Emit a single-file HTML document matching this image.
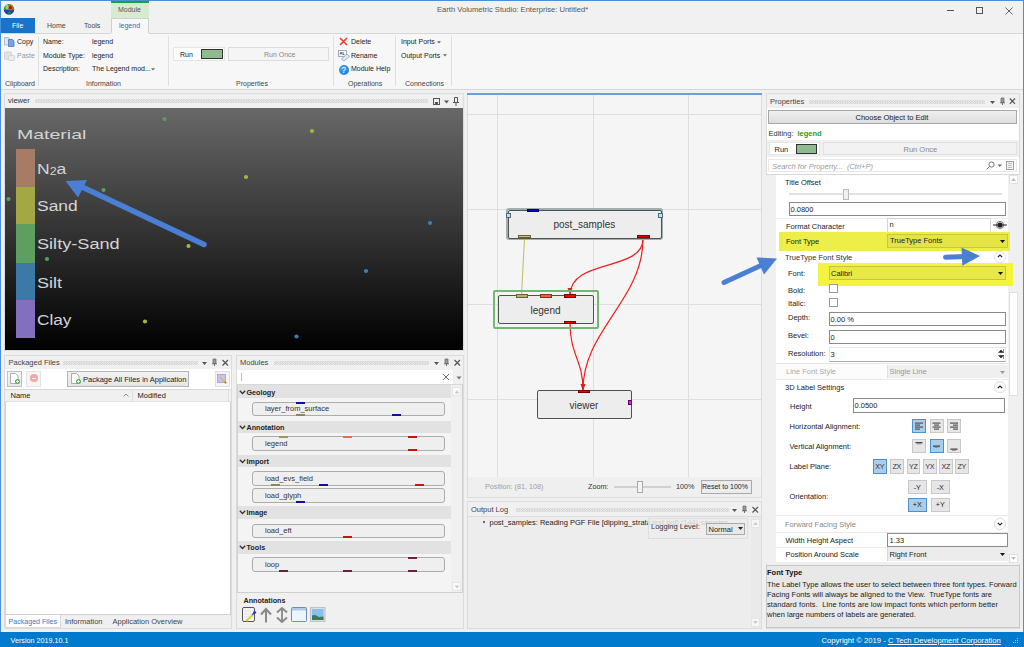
<!DOCTYPE html>
<html><head><meta charset="utf-8">
<style>
*{box-sizing:border-box;margin:0;padding:0}
html,body{width:1024px;height:647px;overflow:hidden;background:#f0f0f0;font-family:"Liberation Sans",sans-serif;color:#222;position:relative}
.a{position:absolute}
.t{position:absolute;white-space:nowrap;line-height:1}
.r7{font-size:7px}
.s75{font-size:7.5px}
.vl{font-size:14px;color:#d4d4d4;transform-origin:0 0}
.b{font-weight:bold}
.s7{font-size:7.2px}
.grip{background:repeating-conic-gradient(#d6d6d6 0 25%,transparent 0 50%) 0 0/2.5px 2px;height:4px!important}
</style></head><body>
<!-- window frame -->
<div class="a" style="left:0;top:0;width:1024px;height:33px;background:#f1f1f1"></div>
<div class="a" style="left:0;top:0;width:1024px;height:1px;background:#4a90d9"></div>
<div class="a" style="left:0;top:0;width:1px;height:647px;background:#4a90d9"></div>
<div class="a" style="left:1023px;top:0;width:1px;height:647px;background:#4a90d9"></div>
<!-- app icon -->
<svg class="a" style="left:2.5px;top:2.5px" width="12" height="12"><defs><clipPath id="gc"><circle cx="6" cy="6.3" r="5.2"/></clipPath></defs><g clip-path="url(#gc)"><rect width="12" height="12" fill="#2aa02a"/><rect y="7" width="12" height="6" fill="#1a3ad0"/><ellipse cx="7.3" cy="4.5" rx="2.8" ry="3" fill="#d06020"/><ellipse cx="7.3" cy="4.8" rx="1.5" ry="1.8" fill="#902010"/><ellipse cx="4" cy="4" rx="1.5" ry="2.5" fill="#90e060"/><ellipse cx="6.5" cy="9.8" rx="1.5" ry="1" fill="#10a010"/></g></svg>
<!-- contextual Module tab -->
<div class="a" style="left:111px;top:1px;width:38px;height:17px;background:#d9ead3"></div>
<div class="a" style="left:111px;top:1px;width:38px;height:2px;background:#1aa33a"></div>
<div class="t r7" style="left:118px;top:6px;color:#555">Module</div>
<div class="t" style="left:437px;top:5.5px;color:#555;font-size:7.6px">Earth Volumetric Studio: Enterprise: Untitled*</div>
<!-- window buttons -->
<div class="a" style="left:947px;top:10px;width:7px;height:1px;background:#555"></div>
<div class="a" style="left:975.5px;top:6.5px;width:7.5px;height:7.5px;border:1px solid #555"></div>
<svg class="a" style="left:1004.5px;top:6.5px" width="9" height="9"><path d="M0.5 0.5L7.5 7.5M7.5 0.5L0.5 7.5" stroke="#555" stroke-width="0.9"/></svg>
<!-- tabs -->
<div class="a" style="left:1px;top:18px;width:34px;height:15px;background:#1a73c8"></div>
<div class="t r7" style="left:12px;top:22px;color:#fff">File</div>
<div class="t r7" style="left:47px;top:22px;color:#444">Home</div>
<div class="t r7" style="left:84px;top:22px;color:#444">Tools</div>
<div class="a" style="left:111px;top:18px;width:38px;height:16px;background:#f7f7f7;border:1px solid #d0d0d0;border-bottom:none"></div>
<div class="t r7" style="left:119px;top:22px;color:#2a6fc0">legend</div>
<!-- ribbon body -->
<div class="a" style="left:1px;top:33px;width:1022px;height:57px;background:#f7f7f7;border-top:1px solid #d6d6d6;border-bottom:1px solid #d6d6d6"></div>
<div class="a" style="left:111px;top:33px;width:38px;height:1px;background:#f7f7f7"></div>
<!-- ribbon contents -->
<svg class="a" style="left:4px;top:36.5px" width="11" height="10"><path d="M0.5 0.5h4l1.5 1.5v6h-5.5z" fill="#dce8f8" stroke="#9ab0d0" stroke-width="0.8"/><path d="M4.5 2.5h4l1.5 1.5v5.5h-5.5z" fill="#7aa4e0" stroke="#4a78c0" stroke-width="0.8"/></svg>
<div class="t r7" style="left:17px;top:38px">Copy</div>
<svg class="a" style="left:4px;top:50.5px" width="11" height="10"><rect x="0.5" y="1" width="7" height="7.5" rx="1" fill="#e2e2e2" stroke="#cfcfcf" stroke-width="0.8"/><rect x="4.5" y="4.5" width="6" height="5" rx="0.8" fill="#ececec" stroke="#d0d0d0" stroke-width="0.8"/></svg>
<div class="t r7" style="left:17px;top:52px;color:#999">Paste</div>
<div class="t r7" style="left:5px;top:80px;color:#444">Clipboard</div>
<div class="a" style="left:38px;top:36px;width:1px;height:50px;background:#e0e0e0"></div>
<div class="t r7" style="left:43px;top:38px">Name:</div>
<div class="t r7" style="left:43px;top:52px">Module Type:</div>
<div class="t r7" style="left:43px;top:65px">Description:</div>
<div class="t r7" style="left:92px;top:38px">legend</div>
<div class="t r7" style="left:92px;top:52px">legend</div>
<div class="t r7" style="left:92px;top:65px">The Legend mod...</div>
<svg class="a" style="left:151px;top:67.5px" width="4" height="3"><path d="M0 0.3h4L2 2.6z" fill="#666"/></svg>
<div class="t r7" style="left:86px;top:80px;color:#444">Information</div>
<div class="a" style="left:168px;top:36px;width:1px;height:50px;background:#e0e0e0"></div>
<div class="a" style="left:173px;top:47px;width:52px;height:14px;background:#fff;border:1px solid #e6e6e6"></div>
<div class="t r7" style="left:180px;top:51px">Run</div>
<div class="a" style="left:201px;top:49px;width:22px;height:10px;background:#8fbc8f;border:1px solid #333"></div>
<div class="a" style="left:228px;top:47px;width:101px;height:14px;background:#f5f5f5;border:1px solid #dcdcdc"></div>
<div class="t r7" style="left:264px;top:51px;color:#888">Run Once</div>
<div class="t r7" style="left:236px;top:80px;color:#444">Properties</div>
<div class="a" style="left:333px;top:36px;width:1px;height:50px;background:#e0e0e0"></div>
<svg class="a" style="left:339px;top:37px" width="9" height="9"><path d="M1 1L8 8M8 1L1 8" stroke="#e8392a" stroke-width="1.5"/></svg>
<div class="t r7" style="left:351px;top:38px">Delete</div>
<svg class="a" style="left:338px;top:50px" width="12" height="11"><rect x="0.5" y="0.5" width="8" height="6" fill="#f8f8f8" stroke="#8a9ab0" stroke-width="0.8"/><path d="M2 4.5L3 2L4 4.5M5 2v2.5h1.5" stroke="#333" stroke-width="0.7" fill="none"/><path d="M3.5 9L9 4L11.5 6.5L6 11Z" fill="#dce8f6" stroke="#7a9ac0" stroke-width="0.7"/></svg>
<div class="t r7" style="left:351px;top:52px">Rename</div>
<div class="a" style="left:338.5px;top:64.5px;width:10px;height:10px;border-radius:50%;background:radial-gradient(circle at 40% 35%,#4aa8f4,#1070d0)"></div>
<div class="t" style="left:341.2px;top:65.5px;color:#fff;font-size:8.5px">?</div>
<div class="t r7" style="left:351px;top:65px">Module Help</div>
<div class="t r7" style="left:348px;top:80px;color:#444">Operations</div>
<div class="a" style="left:395px;top:36px;width:1px;height:50px;background:#e0e0e0"></div>
<div class="t r7" style="left:401px;top:38px">Input Ports</div>
<svg class="a" style="left:436.5px;top:40.5px" width="4" height="3"><path d="M0 0.3h4L2 2.6z" fill="#666"/></svg>
<div class="t r7" style="left:401px;top:52px">Output Ports</div>
<svg class="a" style="left:443px;top:54px" width="4" height="3"><path d="M0 0.3h4L2 2.6z" fill="#666"/></svg>
<div class="t r7" style="left:405px;top:80px;color:#444">Connections</div>
<div class="a" style="left:451px;top:36px;width:1px;height:50px;background:#e0e0e0"></div>
<!-- ===== VIEWER PANEL ===== -->
<div class="a" style="left:4px;top:93px;width:460px;height:258px;background:#f0f0f0;border:1px solid #dcdcdc"></div>
<div class="t s75" style="left:8px;top:97px;color:#333">viewer</div>
<div class="a grip" style="left:35px;top:99px;width:393px;height:4px"></div>
<svg class="a" style="left:432px;top:97px" width="30" height="9"><rect x="1.5" y="1.5" width="6" height="6" fill="none" stroke="#555"/><rect x="3" y="5" width="3" height="2" fill="#555"/><path d="M12 3.5h5l-2.5 3z" fill="#555"/><path d="M22.5 0.5h3v5h-3z M21 5.5h6 M24 5.5v3.5" stroke="#555" fill="none" stroke-width="1"/></svg>
<div class="a" style="left:5px;top:108px;width:458px;height:242px;background:linear-gradient(#686868,#000)"></div>
<div class="t vl" style="left:17px;top:128px;font-size:13px;transform:scaleX(1.5)">Material</div>
<div class="a" style="left:16px;top:149px;width:19px;height:38px;background:#a67c67"></div>
<div class="a" style="left:16px;top:187px;width:19px;height:37px;background:#a3a843"></div>
<div class="a" style="left:16px;top:224px;width:19px;height:39px;background:#5e9e60"></div>
<div class="a" style="left:16px;top:263px;width:19px;height:37px;background:#3c79a6"></div>
<div class="a" style="left:16px;top:300px;width:19px;height:38px;background:#8270be"></div>
<div class="t vl" style="left:37px;top:161.5px;transform:scaleX(1.25)">N<span style="font-size:10px;position:relative;top:1.5px">2</span>a</div>
<div class="t vl" style="left:37px;top:199px;transform:scaleX(1.245)">Sand</div>
<div class="t vl" style="left:37px;top:237px;transform:scaleX(1.295)">Silty-Sand</div>
<div class="t vl" style="left:37px;top:275.5px;transform:scaleX(1.29)">Silt</div>
<div class="t vl" style="left:37px;top:313px;transform:scaleX(1.23)">Clay</div>
<svg class="a" style="left:0;top:0" width="470" height="360">
<g fill="#58a058"><circle cx="164.5" cy="119" r="2.1"/><circle cx="103.5" cy="190" r="2.1"/><circle cx="8.5" cy="199" r="2.1"/><circle cx="47" cy="259" r="2.1"/></g>
<g fill="#a8b440"><circle cx="312" cy="131" r="2.1"/><circle cx="246" cy="177" r="2.1"/><circle cx="188.5" cy="246" r="2.1"/><circle cx="145" cy="321.5" r="2.1"/></g>
<g fill="#3a80b8"><circle cx="430" cy="223" r="2.1"/><circle cx="366" cy="271" r="2.1"/><circle cx="296.5" cy="336.5" r="2.1"/></g>
<path d="M204 244.5L80 186" stroke="#4a7fd4" stroke-width="5.5" stroke-linecap="round"/>
<path d="M65.5 181L87 180L78 197.5Z" fill="#4a7fd4"/>
</svg>
<!-- ===== PACKAGED FILES ===== -->
<div class="a" style="left:4px;top:355px;width:228px;height:274px;background:#f0f0f0;border:1px solid #dcdcdc"></div>
<div class="t s75" style="left:8.5px;top:359px;color:#444">Packaged Files</div>
<div class="a grip" style="left:63px;top:361px;width:135px;height:4px"></div>
<svg class="a" style="left:200px;top:358px" width="30" height="10"><path d="M2 4h5l-2.5 3z" fill="#555"/><path d="M13 1h3v4.5h-3z" fill="#999" stroke="#666" stroke-width="0.7"/><path d="M12 5.8h5M14.5 5.8v2.2" stroke="#666" stroke-width="0.9"/><path d="M22.5 2L28 7.5M28 2L22.5 7.5" stroke="#555" stroke-width="1.2"/></svg>
<div class="a" style="left:5px;top:369px;width:226px;height:20px;background:#fff"></div>
<div class="a" style="left:7px;top:371px;width:15px;height:15.5px;background:linear-gradient(#f6f6f6,#e8e8e8);border:1px solid #c0c0c0"></div>
<svg class="a" style="left:9px;top:372px" width="12" height="13"><path d="M1.5 1.5h5l2.5 2.5v7.5h-7.5z" fill="#fff" stroke="#999" stroke-width="0.8"/><circle cx="8.5" cy="9.5" r="2.5" fill="#62a862"/><path d="M7 9.5h3M8.5 8v3" stroke="#fff" stroke-width="0.8"/></svg>
<div class="a" style="left:26px;top:371px;width:15px;height:15.5px;background:#f6f6f6;border:1px solid #e4e4e4"></div>
<div class="a" style="left:29.5px;top:374px;width:8px;height:8px;border-radius:50%;background:#f4a4a4"></div>
<div class="a" style="left:31.5px;top:377.5px;width:4px;height:1px;background:#fff"></div>
<div class="a" style="left:67px;top:371px;width:122px;height:16px;background:linear-gradient(#f2f2f2,#e6e6e6);border:1px solid #b4b4b4"></div>
<svg class="a" style="left:70px;top:372px" width="12" height="13"><path d="M1.5 1.5h5l2.5 2.5v7.5h-7.5z" fill="#fff" stroke="#999" stroke-width="0.8"/><circle cx="8.5" cy="9.5" r="2.5" fill="#62a862"/><path d="M7 9.5h3M8.5 8v3" stroke="#fff" stroke-width="0.8"/></svg>
<div class="t s75" style="left:83px;top:376px;color:#222">Package All Files in Application</div>
<div class="a" style="left:214.5px;top:371px;width:15px;height:15.5px;background:#f6f6f6;border:1px solid #e0e0e0"></div>
<div class="a" style="left:217px;top:374px;width:9px;height:9px;background:#c4c4f4;border:1px solid #a8a8e8"></div>
<svg class="a" style="left:219px;top:376px" width="8" height="8"><path d="M1 1L7 7" stroke="#d8c040" stroke-width="1.5"/><circle cx="6.5" cy="6.5" r="1" fill="#e05050"/></svg>
<div class="a" style="left:5px;top:389px;width:226px;height:226px;background:#fff;border:1px solid #d0d0d0;border-top:none"></div>
<div class="a" style="left:5px;top:388.5px;width:226px;height:13.5px;background:#f0f0f0;border-top:1px solid #d8d8d8;border-bottom:1px solid #e2e2e2"></div>
<div class="t s75" style="left:10.5px;top:392px">Name</div>
<svg class="a" style="left:123px;top:393px" width="6" height="4"><path d="M0.5 3.5L3 1L5.5 3.5" stroke="#777" fill="none" stroke-width="0.8"/></svg>
<div class="a" style="left:132px;top:389px;width:1px;height:13px;background:#e0e0e0"></div>
<div class="t s75" style="left:137.5px;top:392px">Modified</div>
<div class="a" style="left:228px;top:389px;width:1px;height:13px;background:#e0e0e0"></div>
<div class="a" style="left:5px;top:615px;width:56px;height:13px;background:#fff;border:1px solid #dadada;border-top:none"></div>
<div class="t" style="left:8.5px;top:618.5px;color:#3a78c0;font-size:7.1px">Packaged Files</div>
<div class="t s75" style="left:65px;top:618px;color:#444">Information</div>
<div class="t s75" style="left:112.5px;top:618px;color:#444">Application Overview</div>
<!-- ===== MODULES ===== -->
<div class="a" style="left:236px;top:355px;width:228px;height:274px;background:#f0f0f0;border:1px solid #dcdcdc"></div>
<div class="t s75" style="left:240px;top:359px;color:#444">Modules</div>
<div class="a grip" style="left:274px;top:361px;width:155px;height:4px"></div>
<svg class="a" style="left:432px;top:358px" width="30" height="10"><path d="M2 4h5l-2.5 3z" fill="#555"/><path d="M13 1h3v4.5h-3z" fill="#999" stroke="#666" stroke-width="0.7"/><path d="M12 5.8h5M14.5 5.8v2.2" stroke="#666" stroke-width="0.9"/><path d="M22.5 2L28 7.5M28 2L22.5 7.5" stroke="#555" stroke-width="1.2"/></svg>
<div class="a" style="left:237px;top:370px;width:216px;height:14px;background:#fff"></div>
<div class="a" style="left:241px;top:373px;width:1px;height:8px;background:#c8c860"></div>
<svg class="a" style="left:442px;top:373px" width="8" height="8"><path d="M1 1L7 7M7 1L1 7" stroke="#666" stroke-width="1"/></svg>
<svg class="a" style="left:456px;top:376px" width="6" height="4"><path d="M0.5 0.5h5L3 3.5z" fill="#777"/></svg>
<div class="a" style="left:237px;top:384px;width:226px;height:209px;background:#f4f4f4;border:1px solid #d0d0d0;border-top:1px solid #d8d8d8"></div>
<div class="a" style="left:451px;top:385px;width:11px;height:207px;background:#f0f0f0"></div>
<div class="a" style="left:452px;top:387px;width:9px;height:9px;background:#fafafa;border:1px solid #e6e6e6"></div>
<svg class="a" style="left:454px;top:390px" width="6" height="4"><path d="M0.5 3.5h5L3 0.5z" fill="#ccc"/></svg>
<div class="a" style="left:452px;top:582px;width:9px;height:9px;background:#fafafa;border:1px solid #e6e6e6"></div>
<svg class="a" style="left:454px;top:585px" width="6" height="4"><path d="M0.5 0.5h5L3 3.5z" fill="#ccc"/></svg>
<div class="a" style="left:238px;top:385px;width:213px;height:13.0px;background:#e2e2e2"></div>
<svg class="a" style="left:239px;top:389.5px" width="7" height="5"><path d="M0.8 0.8L3.5 3.5L6.2 0.8" stroke="#333" fill="none" stroke-width="1.3"/></svg>
<div class="t b" style="left:246.5px;top:388.5px;font-size:7.2px">Geology</div>
<div class="a" style="left:252px;top:401.5px;width:193px;height:14.5px;background:#efefef;border:1px solid #acacac;border-radius:3px"></div>
<div class="t s75" style="left:265px;top:405.0px;color:#333">layer_from_surface</div>
<div class="a" style="left:296px;top:401.5px;width:9px;height:2px;background:#1010a0"></div>
<div class="a" style="left:296px;top:414.0px;width:9px;height:2px;background:#8a8a50"></div>
<div class="a" style="left:392px;top:414.0px;width:9px;height:2px;background:#1010a0"></div>
<div class="a" style="left:238px;top:420.5px;width:213px;height:12.5px;background:#e2e2e2"></div>
<svg class="a" style="left:239px;top:424.5px" width="7" height="5"><path d="M0.8 0.8L3.5 3.5L6.2 0.8" stroke="#333" fill="none" stroke-width="1.3"/></svg>
<div class="t b" style="left:246.5px;top:423.5px;font-size:7.2px">Annotation</div>
<div class="a" style="left:252px;top:436px;width:193px;height:14.5px;background:#efefef;border:1px solid #acacac;border-radius:3px"></div>
<div class="t s75" style="left:265px;top:439.5px;color:#333">legend</div>
<div class="a" style="left:279px;top:436px;width:9px;height:2px;background:#9a9a60"></div>
<div class="a" style="left:343px;top:436px;width:9px;height:2px;background:#e07050"></div>
<div class="a" style="left:408px;top:436px;width:9px;height:2px;background:#d01010"></div>
<div class="a" style="left:408px;top:448.5px;width:9px;height:2px;background:#d01010"></div>
<div class="a" style="left:238px;top:454.5px;width:213px;height:12.5px;background:#e2e2e2"></div>
<svg class="a" style="left:239px;top:458.5px" width="7" height="5"><path d="M0.8 0.8L3.5 3.5L6.2 0.8" stroke="#333" fill="none" stroke-width="1.3"/></svg>
<div class="t b" style="left:246.5px;top:457.5px;font-size:7.2px">Import</div>
<div class="a" style="left:252px;top:471px;width:193px;height:14.5px;background:#efefef;border:1px solid #acacac;border-radius:3px"></div>
<div class="t s75" style="left:265px;top:474.5px;color:#333">load_evs_field</div>
<div class="a" style="left:271px;top:483.5px;width:9px;height:2px;background:#8a8a50"></div>
<div class="a" style="left:319px;top:483.5px;width:9px;height:2px;background:#1010a0"></div>
<div class="a" style="left:415px;top:483.5px;width:9px;height:2px;background:#d01010"></div>
<div class="a" style="left:252px;top:488px;width:193px;height:14.5px;background:#efefef;border:1px solid #acacac;border-radius:3px"></div>
<div class="t s75" style="left:265px;top:491.5px;color:#333">load_glyph</div>
<div class="a" style="left:296px;top:500.5px;width:9px;height:2px;background:#1010a0"></div>
<div class="a" style="left:238px;top:506px;width:213px;height:12.5px;background:#e2e2e2"></div>
<svg class="a" style="left:239px;top:510px" width="7" height="5"><path d="M0.8 0.8L3.5 3.5L6.2 0.8" stroke="#333" fill="none" stroke-width="1.3"/></svg>
<div class="t b" style="left:246.5px;top:509px;font-size:7.2px">Image</div>
<div class="a" style="left:252px;top:523.5px;width:193px;height:14.5px;background:#efefef;border:1px solid #acacac;border-radius:3px"></div>
<div class="t s75" style="left:265px;top:527.0px;color:#333">load_eft</div>
<div class="a" style="left:343px;top:536.0px;width:9px;height:2px;background:#d01010"></div>
<div class="a" style="left:238px;top:541px;width:213px;height:12.5px;background:#e2e2e2"></div>
<svg class="a" style="left:239px;top:545px" width="7" height="5"><path d="M0.8 0.8L3.5 3.5L6.2 0.8" stroke="#333" fill="none" stroke-width="1.3"/></svg>
<div class="t b" style="left:246.5px;top:544px;font-size:7.2px">Tools</div>
<div class="a" style="left:252px;top:557px;width:193px;height:14.5px;background:#efefef;border:1px solid #acacac;border-radius:3px"></div>
<div class="t s75" style="left:265px;top:560.5px;color:#333">loop</div>
<div class="a" style="left:408px;top:557px;width:9px;height:2px;background:#6a2040"></div>
<div class="a" style="left:279px;top:569.5px;width:9px;height:2px;background:#6a2040"></div>
<div class="a" style="left:343px;top:569.5px;width:9px;height:2px;background:#6a2040"></div>
<div class="a" style="left:408px;top:569.5px;width:9px;height:2px;background:#6a2040"></div>
<div class="a" style="left:237px;top:594px;width:226px;height:34px;background:#f0f0f0"></div>
<div class="t b" style="left:243.5px;top:596.5px;font-size:7.2px">Annotations</div>
<svg class="a" style="left:241px;top:606px" width="90" height="18">
<rect x="1.5" y="1.5" width="12" height="14" rx="1.5" fill="#f4f4f4" stroke="#555"/><path d="M3 5h8M3 8h8M3 11h8" stroke="#ddd" stroke-width="0.7"/><path d="M5 15L12 9" stroke="#d8d040" stroke-width="2.2"/><path d="M10.5 9.5L13.5 4L15.5 7Z" fill="#2030e0"/>
<path d="M25 16.5V3.5M20 8.5L25 3L30 8.5" stroke="#888" stroke-width="2" fill="none"/>
<path d="M41 3.5V14.5M36 6.5L41 2L46 6.5M36 11.5L41 16L46 11.5" stroke="#888" stroke-width="1.8" fill="none"/>
<rect x="50.5" y="1.5" width="15" height="14" rx="1" fill="#eef4fc" stroke="#6a8cc0"/><rect x="51" y="2" width="14" height="2.5" fill="#b0c8e8"/>
<rect x="69.5" y="1.5" width="14.5" height="14" fill="#ddd" stroke="#c0c0c0"/><rect x="71" y="3" width="11.5" height="11" fill="#8ac0f0"/><path d="M71 14V9.5C74 8 76 10 78 11L82.5 10.5V14Z" fill="#3a7a5a"/>
</svg>
<!-- ===== NETWORK ===== -->
<div class="a" style="left:467px;top:93px;width:295px;height:405px;background:#f0f0f0;border:1px solid #dcdcdc;border-top:none"></div>
<div class="a" style="left:468px;top:95px;width:293px;height:382px;background:#f5f5f5"></div>
<div class="a" style="left:467px;top:93px;width:295px;height:1.5px;background:#6aa0d8"></div>
<div class="a" style="left:497px;top:95px;width:1px;height:382px;background:#dedede"></div>
<div class="a" style="left:593px;top:95px;width:1px;height:382px;background:#dedede"></div>
<div class="a" style="left:688px;top:95px;width:1px;height:382px;background:#dedede"></div>
<div class="a" style="left:468px;top:114px;width:293px;height:1px;background:#dedede"></div>
<div class="a" style="left:468px;top:209px;width:293px;height:1px;background:#dedede"></div>
<div class="a" style="left:468px;top:304px;width:293px;height:1px;background:#dedede"></div>
<div class="a" style="left:468px;top:399px;width:293px;height:1px;background:#dedede"></div>
<!-- wires -->
<svg class="a" style="left:0;top:0" width="770" height="480">
<path d="M524.5 239L521.5 295" stroke="#c8c070" stroke-width="1.1" fill="none"/>
<path d="M643 239C643 272 570 258 570 295" stroke="#f02020" stroke-width="1.2" fill="none"/>
<path d="M643 239C643 300 583 330 583 390" stroke="#f02020" stroke-width="1.2" fill="none"/>
<path d="M570 323C570 355 583 360 583 390" stroke="#f02020" stroke-width="1.2" fill="none"/>
<path d="M580.5 384L583 391L585.5 384Z" fill="#e02020"/>
<path d="M567.5 288L570 295L572.5 288Z" fill="#e02020"/>
</svg>
<!-- post_samples node -->
<div class="a" style="left:506px;top:208px;width:157px;height:32px;border:2px solid #9fb0ae;border-radius:3px;background:#ededed"></div>
<div class="a" style="left:507.5px;top:209.5px;width:154px;height:29px;border:1px solid #505050;border-radius:2px"></div>
<div class="t" style="left:553.5px;top:220px;font-size:10px;color:#333">post_samples</div>
<div class="a" style="left:526.8px;top:208.5px;width:12.5px;height:3.3px;background:#0a0acc;border:0.5px solid #000060"></div>
<div class="a" style="left:506px;top:213px;width:5px;height:5px;background:#bfe0f0;border:1px solid #4a6a80"></div>
<div class="a" style="left:657.5px;top:213px;width:5px;height:5px;background:#bfe0f0;border:1px solid #4a6a80"></div>
<div class="a" style="left:518.2px;top:234.5px;width:12.8px;height:3.5px;background:#c8c070;border:0.5px solid #6a6030"></div>
<div class="a" style="left:637px;top:234.5px;width:12.5px;height:3.5px;background:#f00000;border:0.5px solid #800000"></div>
<!-- legend node -->
<div class="a" style="left:492.5px;top:289.5px;width:106px;height:39px;border:2px solid #72b872;border-radius:2px"></div>
<div class="a" style="left:498px;top:295px;width:95.5px;height:28.5px;border:1px solid #505050;border-radius:2px;background:#ededed"></div>
<div class="t" style="left:530.5px;top:305.5px;font-size:10px;color:#333">legend</div>
<div class="a" style="left:516px;top:294px;width:12px;height:3.5px;background:#b8b070;border:0.5px solid #6a6030"></div>
<div class="a" style="left:539.5px;top:294px;width:12px;height:3.5px;background:#f06040;border:0.5px solid #803020"></div>
<div class="a" style="left:564px;top:294px;width:12px;height:3.5px;background:#f00000;border:0.5px solid #800000"></div>
<div class="a" style="left:564px;top:320.5px;width:12px;height:3.5px;background:#f00000;border:0.5px solid #800000"></div>
<!-- viewer node -->
<div class="a" style="left:536.5px;top:390px;width:95px;height:28.5px;border:1px solid #505050;border-radius:2px;background:#ededed"></div>
<div class="t" style="left:569.5px;top:401px;font-size:10px;color:#333">viewer</div>
<div class="a" style="left:577.5px;top:389.5px;width:12px;height:3.5px;background:#f00000;border:0.5px solid #800000"></div>
<div class="a" style="left:628px;top:400px;width:4px;height:4.5px;background:#f010f0;border:0.5px solid #600060"></div>
<!-- bottom bar -->
<div class="a" style="left:468px;top:477px;width:293px;height:20px;background:#efefef"></div>
<div class="t s7" style="left:485px;top:483px;color:#a0a0a0">Position: (81, 108)</div>
<div class="t s7" style="left:588px;top:483px;color:#333">Zoom:</div>
<div class="a" style="left:614px;top:486px;width:57px;height:2px;background:#e0e0e0;border:0.5px solid #d0d0d0"></div>
<div class="a" style="left:636.5px;top:481px;width:6px;height:12px;background:#f4f4f4;border:1px solid #aaa"></div>
<div class="t s7" style="left:676px;top:483px;color:#333">100%</div>
<div class="a" style="left:700.5px;top:479.5px;width:51px;height:14px;background:#ececec;border:1px solid #aaa"></div>
<div class="t" style="left:702px;top:483px;color:#222;font-size:7px">Reset to 100%</div>
<!-- ===== OUTPUT LOG ===== -->
<div class="a" style="left:467px;top:501px;width:295px;height:128px;background:#f0f0f0;border:1px solid #dcdcdc"></div>
<div class="t s75" style="left:471px;top:506px;color:#444">Output Log</div>
<div class="a grip" style="left:516px;top:508px;width:213px;height:4px"></div>
<svg class="a" style="left:730px;top:505px" width="30" height="10"><path d="M2 4h5l-2.5 3z" fill="#555"/><path d="M13 1h3v4.5h-3z" fill="#999" stroke="#666" stroke-width="0.7"/><path d="M12 5.8h5M14.5 5.8v2.2" stroke="#666" stroke-width="0.9"/><path d="M22.5 2L28 7.5M28 2L22.5 7.5" stroke="#555" stroke-width="1.2"/></svg>
<div class="a" style="left:468px;top:516px;width:293px;height:112px;background:#ededed;border-top:1px solid #dadada"></div>
<div class="a" style="left:750.5px;top:517px;width:10px;height:111px;background:#eaeaea"></div>
<div class="a" style="left:751px;top:519px;width:9px;height:9px;background:#f6f6f6;border:1px solid #e4e4e4"></div>
<svg class="a" style="left:753px;top:522px" width="5" height="3"><path d="M0 3h5L2.5 0z" fill="#ccc"/></svg>
<div class="a" style="left:751px;top:618px;width:9px;height:9px;background:#f6f6f6;border:1px solid #e4e4e4"></div>
<svg class="a" style="left:753px;top:621px" width="5" height="3"><path d="M0 0h5L2.5 3z" fill="#ccc"/></svg>
<div class="a" style="left:483px;top:521px;width:1.5px;height:1.5px;background:#666"></div>
<div class="t s75" style="left:489.5px;top:518.5px;color:#222">post_samples: Reading PGF File [dipping_strata</div>
<div class="a" style="left:648px;top:518px;width:100px;height:20.5px;background:#eeeeee;border:1px solid #dddddd;opacity:0.9"></div>
<div class="t s75" style="left:652px;top:518.5px;color:#cfcfcf">test.pgf] (144) samples</div>
<div class="t s75" style="left:651px;top:523px;color:#333">Logging Level:</div>
<div class="a" style="left:706px;top:522.5px;width:39px;height:12.5px;background:#e8e8e8;border:1px solid #aaa"></div>
<div class="t s75" style="left:708.5px;top:525.5px;color:#222">Normal</div>
<svg class="a" style="left:738px;top:527px" width="5" height="4"><path d="M0 0h5L2.5 3z" fill="#222"/></svg>
<!-- ===== PROPERTIES ===== -->
<div class="a" style="left:766px;top:93px;width:254px;height:536px;background:#f0f0f0;border:1px solid #dcdcdc"></div>
<div class="t s75" style="left:770px;top:97.5px;color:#444">Properties</div>
<div class="a grip" style="left:809px;top:99.5px;width:176px;height:4px"></div>
<svg class="a" style="left:988px;top:97px" width="30" height="10"><path d="M2 4h5l-2.5 3z" fill="#555"/><path d="M13 1h3v4.5h-3z" fill="#999" stroke="#666" stroke-width="0.7"/><path d="M12 5.8h5M14.5 5.8v2.2" stroke="#666" stroke-width="0.9"/><path d="M21.8 1.5L27 6.8M27 1.5L21.8 6.8" stroke="#555" stroke-width="1.2"/></svg>
<div class="a" style="left:767px;top:108px;width:252px;height:66px;background:#fff"></div>
<div class="a" style="left:768px;top:110px;width:249px;height:14px;background:linear-gradient(#efefef,#dedede);border:1px solid #a8a8a8"></div>
<div class="t s75" style="left:855.5px;top:113.5px;color:#222">Choose Object to Edit</div>
<div class="t s75" style="left:768.5px;top:129.5px;color:#333">Editing:</div>
<div class="t s75 b" style="left:797.5px;top:129.5px;color:#2a9a2a">legend</div>
<div class="a" style="left:767px;top:140px;width:252px;height:17px;background:#f0f0f0"></div>
<div class="a" style="left:768.5px;top:142px;width:51px;height:13px;background:#fff;border:1px solid #e6e6e6"></div>
<div class="t s75" style="left:774.5px;top:145.5px;color:#222">Run</div>
<div class="a" style="left:796px;top:144px;width:21px;height:10px;background:#8fbc8f;border:1px solid #333"></div>
<div class="a" style="left:823px;top:142px;width:194px;height:13px;background:#f2f2f2;border:1px solid #e0e0e0"></div>
<div class="t s75" style="left:903.5px;top:145.5px;color:#888">Run Once</div>
<div class="a" style="left:768px;top:159px;width:249px;height:13px;background:#fff;border:1px solid #e8e8e8"></div>
<div class="t s75" style="left:772px;top:162.5px;color:#9a9a9a;font-style:italic">Search for Property...&nbsp;&nbsp;(Ctrl+P)</div>
<svg class="a" style="left:985px;top:161px" width="32" height="10"><circle cx="6.5" cy="3.5" r="2.6" fill="none" stroke="#666" stroke-width="0.9"/><path d="M4.6 5.4L1.5 8.5" stroke="#666" stroke-width="1"/><path d="M12.5 3.5h4.5l-2.25 2.5z" fill="#666"/><rect x="21.5" y="0.5" width="7" height="8" fill="#f4f4f4" stroke="#888" stroke-width="0.8"/><path d="M23 2.5h4M23 4.5h4M23 6.5h4" stroke="#999" stroke-width="0.6"/></svg>
<!-- grid -->
<div class="a" style="left:766px;top:174px;width:254px;height:389px;background:#f0f0f0;border-top:1px solid #d8d8d8"></div>
<div class="a" style="left:776px;top:175px;width:232px;height:387px;background:#fff"></div>
<div class="a" style="left:1008px;top:175px;width:10px;height:387px;background:#f0f0f0"></div>
<div class="a" style="left:1008.5px;top:175px;width:9px;height:9px;background:#fff;border:1px solid #e0e0e0"></div>
<svg class="a" style="left:1011px;top:178px" width="5" height="3"><path d="M0 3h5L2.5 0z" fill="#bbb"/></svg>
<div class="a" style="left:1008.5px;top:292px;width:9px;height:104px;background:#fff;border:1px solid #e0e0e0"></div>
<div class="a" style="left:1008.5px;top:554px;width:9px;height:9px;background:#fff;border:1px solid #e0e0e0"></div>
<svg class="a" style="left:1011px;top:557px" width="5" height="3"><path d="M0 0h5L2.5 3z" fill="#bbb"/></svg>
<div class="t s75" style="left:785px;top:179px;color:#222">Title Offset</div>
<div class="a" style="left:789px;top:193px;width:213px;height:2px;background:#e2e2e2"></div>
<div class="a" style="left:843px;top:189px;width:6px;height:11px;background:#f0f0f0;border:1px solid #bbb"></div>
<div class="a" style="left:789px;top:202px;width:216.5px;height:13.5px;background:#fff;border:1px solid #8a8a8a"></div>
<div class="t s75" style="left:790.5px;top:205.5px;color:#222">0.0800</div>
<div class="a" style="left:776px;top:218px;width:232px;height:1px;background:#ececec"></div>
<div class="t s75" style="left:786px;top:223px;color:#222">Format Character</div>
<div class="a" style="left:887px;top:218px;width:103.5px;height:14.5px;background:#fff;border:1px solid #d4d4d4"></div>
<div class="t s75" style="left:889.5px;top:220.5px;color:#222">n</div>
<svg class="a" style="left:993px;top:221px" width="14" height="8"><path d="M0 4h14" stroke="#222" stroke-width="1"/><circle cx="7" cy="4" r="2.6" fill="#222"/><circle cx="7" cy="4" r="3.6" fill="none" stroke="#222" stroke-width="0.6"/></svg>
<!-- Font Type highlight -->
<div class="a" style="left:779px;top:232px;width:231px;height:19px;background:#eeee48"></div>
<div class="t s75" style="left:786px;top:237.5px;color:#222">Font Type</div>
<div class="a" style="left:887px;top:233.5px;width:120.5px;height:14px;background:#e4e446;border:1px solid #c8c840"></div>
<div class="t s75" style="left:890px;top:237px;color:#222">TrueType Fonts</div>
<svg class="a" style="left:999.5px;top:240px" width="5" height="4"><path d="M0 0h5L2.5 3z" fill="#111"/></svg>
<div class="t s75" style="left:785px;top:253.5px;color:#333">TrueType Font Style</div>
<div class="a" style="left:993.5px;top:250.5px;width:12px;height:12px;border-radius:50%;border:1px solid #ddd;background:#fff"></div>
<svg class="a" style="left:996.5px;top:254px" width="6" height="4"><path d="M0.8 3.2L3 1L5.2 3.2" stroke="#222" stroke-width="1.2" fill="none"/></svg>
<!-- Font: highlight -->
<div class="a" style="left:818px;top:263px;width:194.5px;height:22.5px;background:#f4f440"></div>
<div class="t s75" style="left:788px;top:269.5px;color:#222">Font:</div>
<div class="a" style="left:829px;top:266px;width:176.5px;height:13.5px;background:#e8e848;border:1px solid #c4c440"></div>
<div class="t s75" style="left:831px;top:269.5px;color:#222">Calibri</div>
<svg class="a" style="left:998px;top:271.5px" width="5" height="4"><path d="M0 0h5L2.5 3z" fill="#111"/></svg>
<div class="t s75" style="left:788px;top:286.5px;color:#222">Bold:</div>
<div class="a" style="left:829px;top:284px;width:9px;height:9px;background:#fff;border:1px solid #999"></div>
<div class="t s75" style="left:788px;top:299.5px;color:#222">Italic:</div>
<div class="a" style="left:829px;top:298px;width:9px;height:9px;background:#fff;border:1px solid #999"></div>
<div class="t s75" style="left:788px;top:314px;color:#222">Depth:</div>
<div class="a" style="left:829px;top:312px;width:176.5px;height:13.5px;background:#fff;border:1px solid #8a8a8a"></div>
<div class="t s75" style="left:830.5px;top:315.5px;color:#222">0.00 %</div>
<div class="t s75" style="left:788px;top:331.5px;color:#222">Bevel:</div>
<div class="a" style="left:829px;top:330px;width:176.5px;height:13.5px;background:#fff;border:1px solid #8a8a8a"></div>
<div class="t s75" style="left:830.5px;top:333.5px;color:#222">0</div>
<div class="t s75" style="left:788px;top:349.5px;color:#222">Resolution:</div>
<div class="a" style="left:829px;top:347px;width:176.5px;height:14.5px;background:#fff;border:1px solid #e6e6e6;border-bottom:1px solid #aaa"></div>
<div class="t s75" style="left:830.5px;top:350.5px;color:#222">3</div>
<svg class="a" style="left:998px;top:348px" width="6" height="12"><path d="M0.5 4.5L3 2L5.5 4.5Z M5.5 1v4" fill="#222" stroke="#222" stroke-width="0.5"/><path d="M0.5 7.5L3 10L5.5 7.5Z M5.5 7v4" fill="#222" stroke="#222" stroke-width="0.5"/></svg>
<div class="a" style="left:776px;top:363px;width:232px;height:1px;background:#e4e4e4"></div>
<div class="a" style="left:776px;top:364px;width:232px;height:15px;background:#fcfcfc"></div>
<div class="t s75" style="left:786px;top:368px;color:#aaa">Line Font Style</div>
<div class="a" style="left:887px;top:364.5px;width:120.5px;height:13.5px;background:#efefef;border-left:1px solid #e0e0e0"></div>
<div class="t s75" style="left:889.5px;top:368px;color:#999">Single Line</div>
<svg class="a" style="left:1000px;top:370.5px" width="5" height="4"><path d="M0 0h5L2.5 3z" fill="#999"/></svg>
<div class="a" style="left:776px;top:379px;width:232px;height:1px;background:#ececec"></div>
<div class="t s75" style="left:785px;top:384px;color:#222">3D Label Settings</div>
<div class="a" style="left:993.5px;top:381px;width:12px;height:12px;border-radius:50%;border:1px solid #ddd;background:#fff"></div>
<svg class="a" style="left:996.5px;top:385px" width="6" height="4"><path d="M0.8 3.2L3 1L5.2 3.2" stroke="#222" stroke-width="1.2" fill="none"/></svg>
<div class="t s75" style="left:790px;top:402.5px;color:#222">Height</div>
<div class="a" style="left:853px;top:398px;width:151.5px;height:14.5px;background:#fff;border:1px solid #8a8a8a"></div>
<div class="t s75" style="left:854.5px;top:402px;color:#222">0.0500</div>
<div class="t s75" style="left:789.5px;top:423px;color:#222">Horizontal Alignment:</div>
<div class="t s75" style="left:789.5px;top:443px;color:#222">Vertical Alignment:</div>
<div class="t s75" style="left:789.5px;top:463px;color:#222">Label Plane:</div>
<div class="t s75" style="left:789.5px;top:492.5px;color:#222">Orientation:</div>
<div class="a" style="left:912px;top:419px;width:14px;height:14px;background:#a9cdea;border:1px solid #4f8fcc"></div>
<div class="a" style="left:929.5px;top:419px;width:14px;height:14px;background:#e6e6e6;border:1px solid #c8c8c8"></div>
<div class="a" style="left:947px;top:419px;width:14px;height:14px;background:#e6e6e6;border:1px solid #c8c8c8"></div>
<svg class="a" style="left:912px;top:419px" width="50" height="14"><rect x="3" y="3.5" width="8" height="1.2" fill="#555"/><rect x="3" y="5.5" width="5" height="1.2" fill="#555"/><rect x="3" y="7.5" width="8" height="1.2" fill="#555"/><rect x="3" y="9.5" width="5" height="1.2" fill="#555"/><rect x="20.5" y="3.5" width="8" height="1.2" fill="#555"/><rect x="22.0" y="5.5" width="5" height="1.2" fill="#555"/><rect x="20.5" y="7.5" width="8" height="1.2" fill="#555"/><rect x="22.0" y="9.5" width="5" height="1.2" fill="#555"/><rect x="38" y="3.5" width="8" height="1.2" fill="#555"/><rect x="41" y="5.5" width="5" height="1.2" fill="#555"/><rect x="38" y="7.5" width="8" height="1.2" fill="#555"/><rect x="41" y="9.5" width="5" height="1.2" fill="#555"/></svg>
<div class="a" style="left:912px;top:439px;width:14px;height:14px;background:#e6e6e6;border:1px solid #c8c8c8"></div>
<div class="a" style="left:929.5px;top:439px;width:14px;height:14px;background:#a9cdea;border:1px solid #4f8fcc"></div>
<div class="a" style="left:947px;top:439px;width:14px;height:14px;background:#e6e6e6;border:1px solid #c8c8c8"></div>
<svg class="a" style="left:912px;top:439px" width="50" height="14"><rect x="3.5" y="3" width="7" height="1.3" fill="#444"/><rect x="5" y="4.3" width="4" height="1" fill="#888"/><rect x="21" y="6.5" width="7" height="1.3" fill="#444"/><rect x="22.5" y="7.8" width="4" height="1" fill="#888"/><rect x="38.5" y="9.5" width="7" height="1.3" fill="#444"/><rect x="40" y="10.8" width="4" height="1" fill="#888"/></svg>
<div class="a" style="left:873px;top:459px;width:13.5px;height:14.5px;background:#a9cdea;border:1px solid #4f8fcc"></div>
<div class="t s7" style="left:873px;width:13.5px;text-align:center;top:463px;color:#333;letter-spacing:-0.3px">XY</div>
<div class="a" style="left:890px;top:459px;width:13.5px;height:14.5px;background:#e6e6e6;border:1px solid #c8c8c8"></div>
<div class="t s7" style="left:890px;width:13.5px;text-align:center;top:463px;color:#333;letter-spacing:-0.3px">ZX</div>
<div class="a" style="left:906.5px;top:459px;width:13.5px;height:14.5px;background:#e6e6e6;border:1px solid #c8c8c8"></div>
<div class="t s7" style="left:906.5px;width:13.5px;text-align:center;top:463px;color:#333;letter-spacing:-0.3px">YZ</div>
<div class="a" style="left:923px;top:459px;width:13.5px;height:14.5px;background:#e6e6e6;border:1px solid #c8c8c8"></div>
<div class="t s7" style="left:923px;width:13.5px;text-align:center;top:463px;color:#333;letter-spacing:-0.3px">YX</div>
<div class="a" style="left:939px;top:459px;width:13.5px;height:14.5px;background:#e6e6e6;border:1px solid #c8c8c8"></div>
<div class="t s7" style="left:939px;width:13.5px;text-align:center;top:463px;color:#333;letter-spacing:-0.3px">XZ</div>
<div class="a" style="left:955px;top:459px;width:13.5px;height:14.5px;background:#e6e6e6;border:1px solid #c8c8c8"></div>
<div class="t s7" style="left:955px;width:13.5px;text-align:center;top:463px;color:#333;letter-spacing:-0.3px">ZY</div>
<div class="a" style="left:907.5px;top:480px;width:19.5px;height:14px;background:#e6e6e6;border:1px solid #c8c8c8"></div>
<div class="t s7" style="left:907.5px;width:19.5px;text-align:center;top:483.5px;color:#222">-Y</div>
<div class="a" style="left:930.5px;top:480px;width:19.5px;height:14px;background:#e6e6e6;border:1px solid #c8c8c8"></div>
<div class="t s7" style="left:930.5px;width:19.5px;text-align:center;top:483.5px;color:#222">-X</div>
<div class="a" style="left:907.5px;top:497.5px;width:19.5px;height:14px;background:#a9cdea;border:1px solid #4f8fcc"></div>
<div class="t s7" style="left:907.5px;width:19.5px;text-align:center;top:501.0px;color:#222">+X</div>
<div class="a" style="left:930.5px;top:497.5px;width:19.5px;height:14px;background:#e6e6e6;border:1px solid #c8c8c8"></div>
<div class="t s7" style="left:930.5px;width:19.5px;text-align:center;top:501.0px;color:#222">+Y</div>
<div class="a" style="left:776px;top:515px;width:232px;height:1px;background:#ececec"></div>
<div class="t s75" style="left:785px;top:520.5px;color:#888">Forward Facing Style</div>
<div class="a" style="left:993.5px;top:517.5px;width:12px;height:12px;border-radius:50%;border:1px solid #ddd;background:#fff"></div>
<svg class="a" style="left:996.5px;top:522px" width="6" height="4"><path d="M0.8 0.8L3 3L5.2 0.8" stroke="#222" stroke-width="1.2" fill="none"/></svg>
<div class="a" style="left:776px;top:532px;width:232px;height:1px;background:#ececec"></div>
<div class="t s75" style="left:785.5px;top:536.5px;color:#222">Width Height Aspect</div>
<div class="a" style="left:887px;top:533px;width:120.5px;height:13.5px;background:#fff;border:1px solid #8a8a8a"></div>
<div class="t s75" style="left:889.5px;top:536.5px;color:#222">1.33</div>
<div class="a" style="left:776px;top:547px;width:232px;height:1px;background:#ececec"></div>
<div class="t s75" style="left:785.5px;top:551px;color:#222">Position Around Scale</div>
<div class="a" style="left:887px;top:547px;width:120.5px;height:14px;background:#ececec;border-left:1px solid #d8d8d8"></div>
<div class="t s75" style="left:889.5px;top:551px;color:#222">Right Front</div>
<svg class="a" style="left:1000px;top:553px" width="5" height="4"><path d="M0 0h5L2.5 3z" fill="#111"/></svg>
<!-- description -->
<div class="a" style="left:766px;top:565px;width:254px;height:63px;background:#e8e8e8;border:1px solid #c8c8c8"></div>
<div class="t s75 b" style="left:767px;top:568.5px;color:#111">Font Type</div>
<div class="t s75" style="left:767px;top:580.5px;color:#222">The Label Type allows the user to select between three font types. Forward</div>
<div class="t s75" style="left:767px;top:590.5px;color:#222">Facing Fonts will always be aligned to the View.&nbsp; TrueType fonts are</div>
<div class="t s75" style="left:767px;top:600.5px;color:#222;letter-spacing:0.08px">standard fonts.&nbsp; Line fonts are low impact fonts which perform better</div>
<div class="t s75" style="left:767px;top:611px;color:#222">when large numbers of labels are generated.</div>
<!-- arrows on props -->
<svg class="a" style="left:700px;top:240px" width="300" height="50">
<path d="M24 42.5L62 25" stroke="#4a7fd4" stroke-width="5" stroke-linecap="round"/>
<path d="M77 18.5L56.5 17.5L64 34.5Z" fill="#4a7fd4"/>
<path d="M245.5 17.2L265 16.5" stroke="#4a7fd4" stroke-width="5" stroke-linecap="round"/>
<path d="M280 16L261.5 7.5L262.3 25.7Z" fill="#4a7fd4"/>
</svg>
<!-- ===== STATUS BAR ===== -->
<div class="a" style="left:0;top:632px;width:1024px;height:15px;background:#007acc"></div>
<div class="t" style="left:10.5px;top:636.5px;color:#fff;font-size:7.2px">Version 2019.10.1</div>
<div class="t" style="left:821.5px;top:636.5px;color:#fff;font-size:7.65px">Copyright © 2019 - <span style="text-decoration:underline">C Tech Development Corporation</span></div>
<svg class="a" style="left:1012px;top:637px" width="8" height="8"><g fill="#9ac8ea"><rect x="5" y="1" width="1" height="1"/><rect x="3" y="3" width="1" height="1"/><rect x="5" y="3" width="1" height="1"/><rect x="1" y="5" width="1" height="1"/><rect x="3" y="5" width="1" height="1"/><rect x="5" y="5" width="1" height="1"/></g></svg>
</body></html>
